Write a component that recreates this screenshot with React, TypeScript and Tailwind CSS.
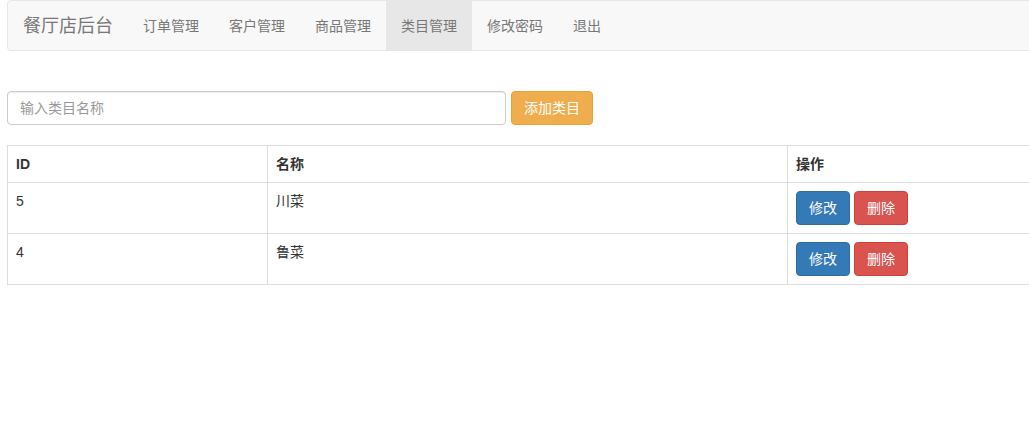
import React from 'react';

const font = { fontFamily: '"Liberation Sans", "Noto Sans CJK SC", sans-serif' };

const navItems = ['订单管理', '客户管理', '商品管理', '类目管理', '修改密码', '退出'];

const rows = [
  { id: 5, name: '川菜' },
  { id: 4, name: '鲁菜' },
];

export default function App() {
  return (
    <div className="w-[1029px] h-[430px] overflow-hidden bg-white text-[14px] leading-[20px] text-[#333]" style={font}>
      <div className="w-[1040px] ml-[7px]">
        {/* Navbar */}
        <nav className="flex h-[51px] bg-[#f8f8f8] border border-[#e7e7e7] rounded-[4px]">
          <a className="px-[15px] py-[15px] text-[18px] leading-[20px] text-[#777]">餐厅店后台</a>
          <ul className="flex">
            {navItems.map((item) => (
              <li key={item}>
                <a
                  className={`block px-[15px] py-[15px] text-[#777] ${
                    item === '类目管理' ? 'bg-[#e7e7e7] text-[#555]' : ''
                  }`}
                >
                  {item}
                </a>
              </li>
            ))}
          </ul>
        </nav>

        {/* Add form */}
        <div className="flex gap-[5px] mt-[40px]">
          <input
            className="w-[499px] h-[34px] px-[12px] border border-[#ccc] rounded-[4px] text-[14px] text-[#555] placeholder:text-[#999] shadow-[inset_0_1px_1px_rgba(0,0,0,0.075)] outline-none"
            placeholder="输入类目名称"
            style={font}
          />
          <button className="h-[34px] px-[12px] bg-[#f0ad4e] border border-[#eea236] rounded-[4px] text-white">
            添加类目
          </button>
        </div>

        {/* Table */}
        <table className="w-[1040px] mt-[20px] border-collapse border border-[#ddd] table-fixed">
          <thead>
            <tr>
              <th className="w-[260px] p-[8px] text-left font-bold border border-[#ddd]">ID</th>
              <th className="w-[520px] p-[8px] text-left font-bold border border-[#ddd]">名称</th>
              <th className="p-[8px] text-left font-bold border border-[#ddd]">操作</th>
            </tr>
          </thead>
          <tbody>
            {rows.map((r) => (
              <tr key={r.id}>
                <td className="p-[8px] align-top border border-[#ddd]">{r.id}</td>
                <td className="p-[8px] align-top border border-[#ddd]">{r.name}</td>
                <td className="p-[8px] align-top border border-[#ddd]">
                  <div className="flex gap-[4px]">
                    <button className="h-[34px] px-[12px] bg-[#337ab7] border border-[#2e6da4] rounded-[4px] text-white">修改</button>
                    <button className="h-[34px] px-[12px] bg-[#d9534f] border border-[#d43f3a] rounded-[4px] text-white">删除</button>
                  </div>
                </td>
              </tr>
            ))}
          </tbody>
        </table>
      </div>
    </div>
  );
}
